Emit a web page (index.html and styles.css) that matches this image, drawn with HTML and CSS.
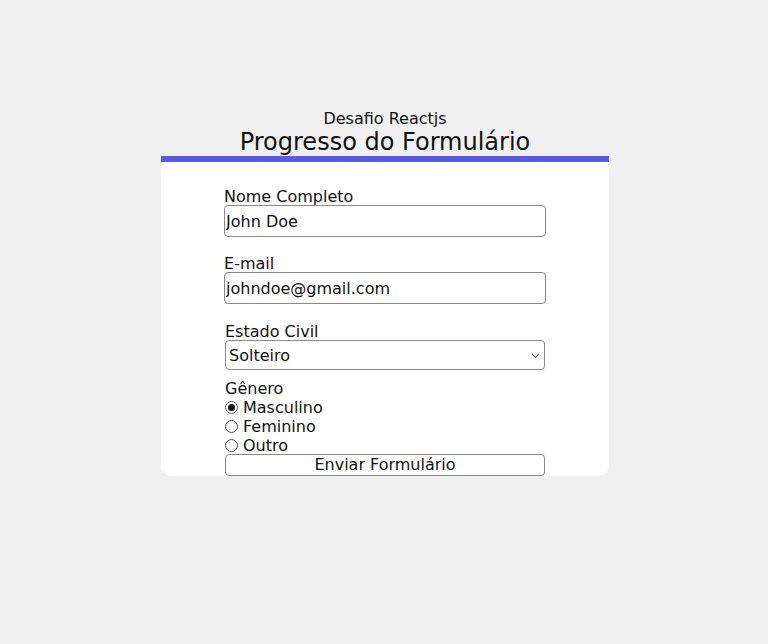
FILE: index.html
```html
<!DOCTYPE html>
<html lang="pt-BR">
<head>
<meta charset="utf-8">
<title>Desafio Reactjs</title>
<link rel="stylesheet" href="styles.css">
</head>
<body>
<main class="page">
  <header class="head">
    <div class="subtitle">Desafio Reactjs</div>
    <h1 class="title">Progresso do Formulário</h1>
  </header>
  <section class="card">
    <div class="bar"><div class="bar-fill" style="width:100%"></div></div>
    <form class="form">
      <div class="field">
        <label class="label" for="nome">Nome Completo</label>
        <input class="input" id="nome" type="text" value="John Doe">
      </div>
      <div class="field">
        <label class="label" for="email">E-mail</label>
        <input class="input" id="email" type="text" value="johndoe@gmail.com">
      </div>
      <div class="field field-sel">
        <label class="label label-sel" for="civil">Estado Civil</label>
        <div class="select-wrap">
          <select class="select" id="civil">
            <option>Solteiro</option>
            <option>Casado</option>
          </select>
          <svg class="chev" width="9" height="6" viewBox="0 0 9 6"><path d="M1 1 L4.5 4.5 L8 1" fill="none" stroke="#6a6a6a" stroke-width="1.2"/></svg>
        </div>
      </div>
      <div class="group">
        <div class="label label-sel label-g">Gênero</div>
        <label class="radio"><input type="radio" name="g" checked> Masculino</label>
        <label class="radio"><input type="radio" name="g"> Feminino</label>
        <label class="radio"><input type="radio" name="g"> Outro</label>
      </div>
      <button class="btn" type="button">Enviar Formulário</button>
    </form>
  </section>
</main>
</body>
</html>
```
FILE: styles.css
```css
html, body {
  margin: 0;
  padding: 0;
  background: #f0f0f0;
  font-family: "DejaVu Sans", Verdana, sans-serif;
  color: #111;
}
.page {
  display: flex;
  flex-direction: column;
  align-items: center;
  padding-top: 109px;
  padding-left: 2px;
}
.head {
  text-align: center;
}
.subtitle {
  font-size: 16px;
  line-height: 19px;
}
.title {
  margin: 0;
  font-weight: normal;
  font-size: 24px;
  line-height: 28px;
}
.card {
  width: 448px;
  background: #fff;
  border-radius: 0 0 10px 10px;
  box-sizing: border-box;
}
.bar {
  height: 6px;
  background: #e6e6e6;
}
.bar-fill {
  height: 100%;
  background: #5a5ae8;
}
.form {
  display: flex;
  flex-direction: column;
  width: 322px;
  margin: 0 auto;
  padding-top: 26px;
}
.field {
  display: flex;
  flex-direction: column;
  margin-bottom: 18px;
}
.field-sel {
  margin-top: 1px;
  margin-bottom: 10px;
}
.label {
  font-size: 16px;
  line-height: 17px;
}
.label-g {
  line-height: 18px;
}
.label-sel {
  padding-left: 1px;
}
.input {
  height: 32px;
  box-sizing: border-box;
  border: 1px solid #8a8a8a;
  border-radius: 4px;
  padding: 0 0 0 1px;
  font: inherit;
  font-size: 16px;
  color: #111;
  background: #fff;
}
.select-wrap {
  position: relative;
  margin-left: 1px;
  width: 320px;
}
.select {
  -webkit-appearance: none;
  appearance: none;
  display: block;
  height: 30px;
  width: 320px;
  box-sizing: border-box;
  border: 1px solid #8a8a8a;
  border-radius: 4px;
  font: inherit;
  font-size: 16px;
  color: #111;
  background: #fff;
  padding-left: 3px;
}
.chev {
  position: absolute;
  right: 5px;
  top: 13px;
  pointer-events: none;
}
.group {
  display: flex;
  flex-direction: column;
}
.radio {
  display: flex;
  align-items: center;
  font-size: 16px;
  line-height: 19px;
}
.radio input {
  -webkit-appearance: none;
  appearance: none;
  margin: 0 5px 0 1px;
  width: 13px;
  height: 13px;
  box-sizing: border-box;
  border: 1px solid #555;
  border-radius: 50%;
  background: #fff;
  display: flex;
  align-items: center;
  justify-content: center;
}
.radio input:checked::after {
  content: "";
  width: 7px;
  height: 7px;
  border-radius: 50%;
  background: #111;
}
.btn {
  margin: -1px 0 0 1px;
  width: 320px;
  height: 22px;
  box-sizing: border-box;
  border: 1px solid #8a8a8a;
  border-radius: 4px;
  background: #fff;
  font: inherit;
  font-size: 16px;
  color: #111;
  padding: 0;
  line-height: 20px;
}
```
